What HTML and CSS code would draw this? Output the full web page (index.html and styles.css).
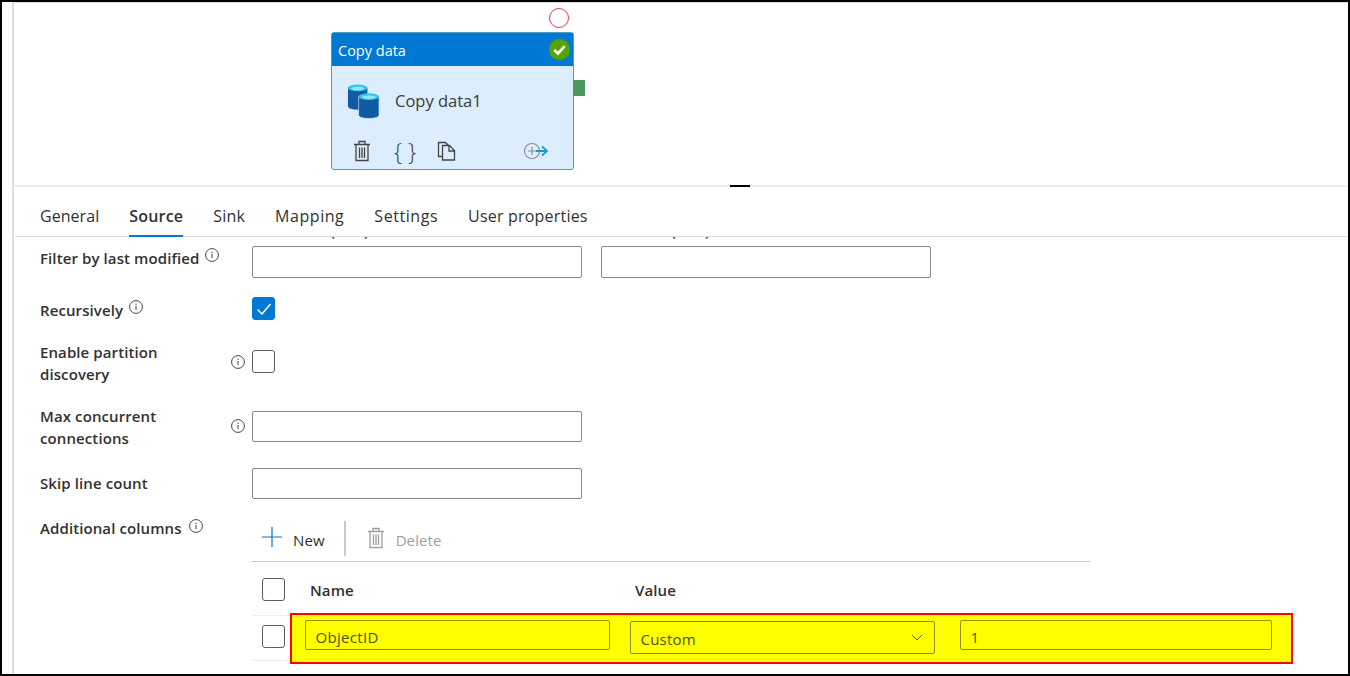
FILE: index.html
```html
<!DOCTYPE html>
<html lang="en">
<head>
<meta charset="utf-8">
<title>Copy data source settings</title>
<link rel="stylesheet" href="styles.css">
</head>
<body>
<svg class="defs" width="0" height="0" aria-hidden="true">
  <symbol id="info" viewBox="0 0 14 14">
    <circle cx="7" cy="7" r="6.4" fill="none" stroke="#444" stroke-width="1"/>
    <path d="M7 6v4.2" stroke="#444" stroke-width="1" fill="none"/>
    <circle cx="7" cy="4.2" r=".7" fill="#444"/>
  </symbol>
  <symbol id="trash" viewBox="0 0 18 22">
    <path d="M1 4.500h16M6 4.500V1.500h6v3M3 4.500v16h12v-16M6.500 7.500v10.500M9 7.500v10.500M11.500 7.500v10.500" fill="none" stroke="currentColor" stroke-width="1.300"/>
  </symbol>
</svg>
<main class="frame">
  <div class="workspace">
    <section class="canvas">
      <span class="marker"></span>
      <article class="activity">
        <header class="activity-head">
          <span>Copy data</span>
          <svg class="ok" width="21" height="21" viewBox="0 0 20 20"><circle cx="10" cy="10" r="10" fill="#57a300"/><path d="M5 10.500l3.500 3.300 6.500-7" fill="none" stroke="#fff" stroke-width="2.600"/></svg>
        </header>
        <div class="activity-body">
          <svg class="db" width="33" height="35" viewBox="0 0 34 36">
            <path d="M1 4v19c0 2 4 3.500 10 3.500s10-1.500 10-3.500V4z" fill="#0f5ca3"/>
            <ellipse cx="11" cy="4" rx="10" ry="3.500" fill="#3bc5ea"/>
            <ellipse cx="11" cy="4.500" rx="6.500" ry="1.800" fill="#8fe6f7"/>
            <path d="M12 13v19c0 2 4 3.500 10.500 3.500S33 34 33 32V13z" fill="#0f5ca3" stroke="#deecf9" stroke-width=".6"/>
            <ellipse cx="22.500" cy="13" rx="10.500" ry="3.500" fill="#3bc5ea"/>
            <ellipse cx="22.500" cy="13.500" rx="7" ry="1.800" fill="#8fe6f7"/>
          </svg>
          <span class="activity-name">Copy data1</span>
        </div>
        <footer class="activity-tools">
          <svg class="tool" width="18" height="22"><use href="#trash"/></svg>
          <span class="braces">{ }</span>
          <svg class="tool copy" width="20" height="20" viewBox="0 0 20 20"><path d="M5.500 15.500H1.500V1.500h7l3 3M5.500 4.500h7l5 5v9.500h-12zM12 4.500v5.500h5.500" fill="none" stroke="currentColor" stroke-width="1.300"/></svg>
          <svg class="connect" width="26" height="18" viewBox="0 0 26 18"><circle cx="9" cy="9" r="7.500" fill="none" stroke="#8a8a8a" stroke-width="1.100"/><path d="M5 9h8M9 5v8" stroke="#8a8a8a" stroke-width="1.100"/><path d="M13 9h11M19 4.500l5 4.500-5 4.500" fill="none" stroke="#1b9ad2" stroke-width="1.800"/></svg>
        </footer>
        <span class="output-port"></span>
      </article>
    </section>
    <div class="splitter"><span class="grip"></span></div>
    <section class="panel">
      <nav class="tabs">
        <a class="tab">General</a>
        <a class="tab tab-active">Source</a>
        <a class="tab">Sink</a>
        <a class="tab tab-wide">Mapping</a>
        <a class="tab tab-wide">Settings</a>
        <a class="tab">User properties</a>
      </nav>
      <div class="scroller">
        <div class="clipped-labels">
          <span class="clip-label">Start time (UTC)</span>
          <span class="clip-label">End time (UTC)</span>
        </div>
        <div class="field field-filter">
          <div class="label label-inline"><span>Filter by last modified</span><svg class="info" width="14" height="14"><use href="#info"/></svg></div>
          <div class="pair"><span class="input"></span><span class="input"></span></div>
        </div>
        <div class="field field-recursive">
          <div class="label label-inline"><span>Recursively</span><svg class="info" width="14" height="14"><use href="#info"/></svg></div>
          <span class="check check-on"><svg width="16" height="14" viewBox="0 0 16 14"><path d="M1.500 7.500l4.500 4.500 8.500-10" fill="none" stroke="#fff" stroke-width="1.500"/></svg></span>
        </div>
        <div class="field field-partition">
          <div class="label label-wrap"><span class="label-text">Enable partition discovery</span><svg class="info info-end" width="14" height="14"><use href="#info"/></svg></div>
          <span class="check"></span>
        </div>
        <div class="field field-max">
          <div class="label label-wrap"><span class="label-text">Max concurrent connections</span><svg class="info info-end" width="14" height="14"><use href="#info"/></svg></div>
          <span class="input input-short"></span>
        </div>
        <div class="field field-skip">
          <div class="label"><span>Skip line count</span></div>
          <span class="input input-short"></span>
        </div>
        <div class="field field-columns">
          <div class="label label-inline"><span>Additional columns</span><svg class="info" width="14" height="14"><use href="#info"/></svg></div>
          <div class="table">
            <div class="toolbar">
              <button class="tbtn"><svg class="plus" width="20" height="20" viewBox="0 0 20 20"><path d="M10 0v20M0 10h20" stroke="#0078d4" stroke-width="1.200"/></svg><span>New</span></button>
              <span class="tsep"></span>
              <button class="tbtn tbtn-off"><svg width="18" height="22"><use href="#trash"/></svg><span>Delete</span></button>
            </div>
            <div class="thead">
              <span class="check"></span>
              <span class="th th-name">Name</span>
              <span class="th">Value</span>
            </div>
            <div class="trow">
              <span class="check"></span>
              <div class="highlight">
                <span class="hl-input hl-name">ObjectID</span>
                <span class="hl-input hl-select">Custom<svg width="12" height="7" viewBox="0 0 12 7"><path d="M1 1l5 5 5-5" fill="none" stroke="#555500" stroke-width="1"/></svg></span>
                <span class="hl-input hl-value">1</span>
              </div>
            </div>
          </div>
        </div>
      </div>
    </section>
  </div>
</main>
</body>
</html>
```
FILE: styles.css
```css
* { box-sizing: border-box; }
html, body { margin: 0; padding: 0; }
body { width: 1350px; height: 676px; overflow: hidden; background: #fff; font-family: "Open Sans", "Noto Sans", sans-serif; color: #323130; }
.defs { position: absolute; }
.frame { width: 1350px; height: 676px; border: 2px solid #000; background: #fff; overflow: hidden; }
.workspace { height: 100%; margin-left: 10px; border-left: 2px solid #ddd; border-top: 1px solid #ddd; display: flex; flex-direction: column; }

.canvas { position: relative; height: 182px; flex: none; }
.marker { position: absolute; left: 535px; top: 5px; width: 20px; height: 20px; border: 1.500px solid #f0384c; border-radius: 50%; }
.activity { position: absolute; left: 317px; top: 29px; width: 243px; height: 138px; background: #dceefd; border: 1.500px solid #4a9cc0; border-radius: 3px; display: flex; flex-direction: column; }
.activity-head { height: 33px; flex: none; background: #0078d4; color: #fff; font-size: 14.500px; display: flex; align-items: center; justify-content: space-between; padding: 0 3px 0 6px; }
.activity-head > span { padding-top: 1px; }
.activity-body { height: 70px; display: flex; align-items: center; padding-left: 15px; gap: 15px; }
.activity-name { font-size: 16.500px; color: #3b3a39; margin-top: -2px; }
.activity-tools { display: flex; align-items: center; height: 30px; color: #444; position: relative; padding-left: 21px; }
.tool { display: block; }
.braces { font-size: 23px; line-height: 30px; width: 20px; margin-left: 23px; margin-right: 4px; white-space: nowrap; font-weight: 300; }
.copy { margin-left: 19px; }
.connect { margin-left: auto; margin-right: 24px; }
.output-port { position: absolute; left: 241px; top: 47px; width: 12px; height: 16px; background: #4e9560; }

.splitter { height: 2px; flex: none; background: #eee; display: flex; }
.grip { width: 20px; height: 2px; background: #000; margin-left: 716px; }

.panel { flex: 1; min-height: 0; display: flex; flex-direction: column; }
.tabs { height: 50px; flex: none; display: flex; gap: 30px; padding-left: 26px; margin-left: 1px; border-bottom: 1px solid #ddd; font-size: 16px; letter-spacing: .2px; }
.tabs .tab:first-child { margin-left: -1px; letter-spacing: .05px; }
.tab { height: 50px; line-height: 58px; display: block; }
.tab-active { font-weight: 600; border-bottom: 2px solid #0078d4; }
.tab-wide { letter-spacing: .55px; }

.scroller { flex: 1; min-height: 0; overflow: hidden; font-size: 15px; }
.clipped-labels { margin-top: -16px; margin-left: 240px; height: 19px; display: flex; line-height: 18px; font-weight: 600; }
.clip-label { width: 349px; }
.field { display: grid; grid-template-columns: 212px 1fr; padding-left: 26px; }
.field-filter { margin-top: 6px; }
.field-recursive { margin-top: 19px; }
.field-partition { margin-top: 19px; }
.field-max { margin-top: 19px; }
.field-skip { margin-top: 18px; }
.field-columns { margin-top: 19px; }

.label { font-weight: 600; line-height: 22.500px; letter-spacing: .1px; display: flex; align-items: flex-start; }
.label-inline .info { margin: 1px 0 0 6px; flex: none; }
.field-filter .label { padding-top: 1px; }
.field-recursive .label { padding-top: 2px; }
.label-wrap { position: relative; }
.label-text { width: 170px; }
.info-end { position: absolute; left: 191px; top: 14px; }
.field-skip .label { padding-top: 4px; }
.field-columns .label { margin-top: -1px; }
.field-columns .label .info { margin: 2px 0 0 7px; }

.pair { display: flex; gap: 19px; }
.input { display: block; width: 330px; height: 32px; border: 1px solid #8a8886; border-radius: 2px; }
.input-short { height: 31px; }
.field-max .input { margin-top: 6px; }
.check { display: block; width: 23px; height: 23px; border: 1px solid #605e5c; border-radius: 3px; flex: none; background: #fff; }
.check-on { background: #0078d4; border-color: #0078d4; display: flex; align-items: center; justify-content: center; }
.field-partition .check { margin-top: 9px; }

.table { width: 838px; }
.toolbar { height: 44px; border-bottom: 1px solid #c8c8c8; display: flex; align-items: center; padding: 0 0 2px 10px; }
.tbtn { border: 0; background: none; padding: 0; font: inherit; color: #323130; display: flex; align-items: center; gap: 11px; letter-spacing: .1px; }
.tbtn span { padding-top: 3px; }
.tbtn svg { flex: none; }
.tbtn .plus { margin-top: -2px; }
.tsep { width: 2px; height: 35px; background: #c8c8c8; margin: 0 21px 0 19px; }
.tbtn-off { color: #a19f9d; }
.thead { height: 53px; display: flex; align-items: center; padding-left: 10px; font-weight: 600; }
.thead .check { margin-top: 2px; }
.th { display: block; letter-spacing: .1px; padding-top: 4px; }
.th-name { width: 325px; margin-left: 25px; }
.trow { height: 46px; position: relative; border-top: 1px solid #eee; border-bottom: 1px solid #eee; display: flex; align-items: center; padding-left: 10px; }
.trow > .check { margin-top: -2px; }
.highlight { position: absolute; left: 38px; top: -3px; width: 1003px; height: 51px; background: #ff0; border: 2.500px solid #f00; display: flex; padding: 5.500px 0 0 12.500px; gap: 20px; color: #4a5200; font-weight: 400; }
.hl-input { display: flex; align-items: center; justify-content: space-between; height: 30px; border: 1px solid #8f8f00; border-radius: 2px; padding: 3px 10px 0; letter-spacing: .3px; }
.hl-name { width: 305px; }
.hl-select { width: 305px; height: 33px; margin-top: 1px; padding: 3px 11px 0 10px; letter-spacing: .2px; }
.hl-select svg { flex: none; margin-top: -3px; }
.hl-value { width: 312px; margin-left: 5px; }
```
